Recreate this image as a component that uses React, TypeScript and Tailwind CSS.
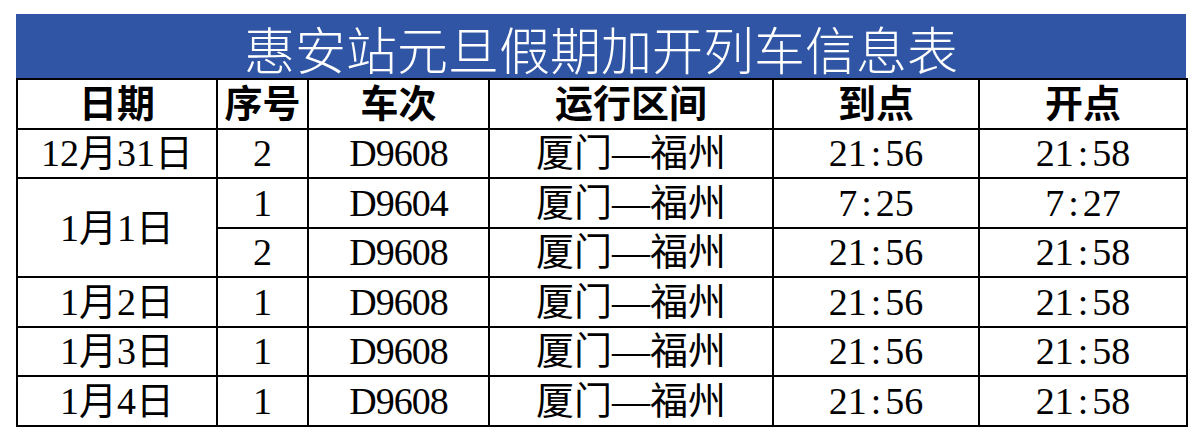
const rows = [
  { date: '12月31日', span: 1, no: '2', train: 'D9608', arr: ['21', '56'], dep: ['21', '58'] },
  { date: '1月1日', span: 2, no: '1', train: 'D9604', arr: ['7', '25'], dep: ['7', '27'] },
  { date: null, span: 0, no: '2', train: 'D9608', arr: ['21', '56'], dep: ['21', '58'] },
  { date: '1月2日', span: 1, no: '1', train: 'D9608', arr: ['21', '56'], dep: ['21', '58'] },
  { date: '1月3日', span: 1, no: '1', train: 'D9608', arr: ['21', '56'], dep: ['21', '58'] },
  { date: '1月4日', span: 1, no: '1', train: 'D9608', arr: ['21', '56'], dep: ['21', '58'] },
];

function Time({ t }: { t: string[] }) {
  return (
    <>
      {t[0]}
      <span className="mx-[4px]">:</span>
      {t[1]}
    </>
  );
}

const cell = 'border-2 border-black text-center align-middle p-0 leading-none';

export default function App() {
  return (
    <div className="min-h-screen bg-white pt-[14px] pl-[16px]">
      <div className="w-[1170px]">
        <div className="h-[64px] bg-[#2f55a4] flex items-center justify-center pt-[4px]">
          <h1 className="text-white text-[51px] font-light leading-none font-['Noto_Sans_CJK_SC',sans-serif]">
            惠安站元旦假期加开列车信息表
          </h1>
        </div>
        <table className="w-[1170px] border-collapse table-fixed text-black font-['Liberation_Serif','Noto_Sans_CJK_SC',serif] text-[38px]">
          <colgroup>
            <col className="w-[200px]" />
            <col className="w-[91px]" />
            <col className="w-[181px]" />
            <col className="w-[284px]" />
            <col className="w-[206px]" />
            <col className="w-[208px]" />
          </colgroup>
          <thead>
            <tr className="h-[49.5px] font-bold">
              <th className={cell}>日期</th>
              <th className={cell}>序号</th>
              <th className={cell}>车次</th>
              <th className={cell}>运行区间</th>
              <th className={cell}>到点</th>
              <th className={cell}>开点</th>
            </tr>
          </thead>
          <tbody>
            {rows.map((r, i) => (
              <tr key={i} className="h-[49.5px]">
                {r.date && (
                  <td rowSpan={r.span} className={cell}>
                    {r.date}
                  </td>
                )}
                <td className={cell}>{r.no}</td>
                <td className={cell + ' tracking-[-1px]'}>{r.train}</td>
                <td className={cell}>厦门—福州</td>
                <td className={cell}>
                  <Time t={r.arr} />
                </td>
                <td className={cell}>
                  <Time t={r.dep} />
                </td>
              </tr>
            ))}
          </tbody>
        </table>
      </div>
    </div>
  );
}
